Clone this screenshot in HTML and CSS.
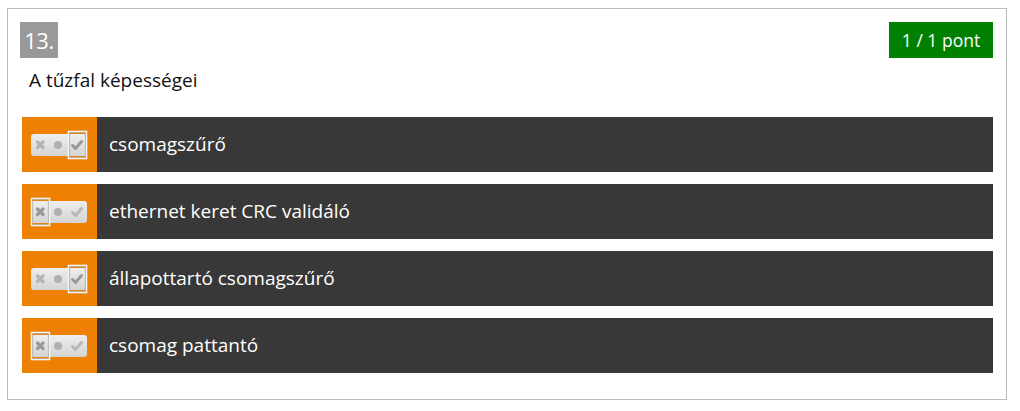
FILE: index.html
```html
<!DOCTYPE html>
<html>
<head>
<meta charset="utf-8">
<link rel="stylesheet" href="styles.css">
</head>
<body>
<div class="card">
  <div class="head">
    <span class="num">13.</span>
    <span class="score">1 / 1 pont</span>
  </div>
  <div class="title">A tűzfal képességei</div>
  <div class="rows">
    <div class="row">
      <div class="mark">
        <svg class="toggle" width="60" height="30" viewBox="0 0 60 30">
          <defs><linearGradient id="g1" x1="0" y1="0" x2="0" y2="1"><stop offset="0" stop-color="#eeeeee"/><stop offset="1" stop-color="#d4d4d4"/></linearGradient></defs>
          <rect x="2" y="4" width="56" height="22" rx="3" fill="url(#g1)"/>
          <path d="M8.5 12 L14 17.5 M14 12 L8.5 17.5" stroke="#b4b4b4" stroke-width="3.2" stroke-linecap="round"/>
          <circle cx="29" cy="15" r="4" fill="#b0b0b0"/>
          <path d="M43.5 15.5 L46.5 18.5 L52.5 11.5" stroke="#999" stroke-width="3" fill="none" stroke-linecap="round" stroke-linejoin="round"/>
          <rect x="39.5" y="1.5" width="18" height="27" fill="none" stroke="#f4f4f4" stroke-width="1.6"/>
          <rect x="40.7" y="2.7" width="15.6" height="24.6" fill="none" stroke="#aaaaaa" stroke-width="0.8"/>
        </svg>
      </div>
      <div class="label">csomagszűrő</div>
    </div>
    <div class="row">
      <div class="mark">
        <svg class="toggle" width="60" height="30" viewBox="0 0 60 30">
          <defs><linearGradient id="g2" x1="0" y1="0" x2="0" y2="1"><stop offset="0" stop-color="#eeeeee"/><stop offset="1" stop-color="#d4d4d4"/></linearGradient></defs>
          <rect x="2" y="4" width="56" height="22" rx="3" fill="url(#g2)"/>
          <path d="M8.5 12 L14 17.5 M14 12 L8.5 17.5" stroke="#999" stroke-width="3.2" stroke-linecap="round"/>
          <circle cx="29" cy="15" r="4" fill="#b0b0b0"/>
          <path d="M43.5 15.5 L46.5 18.5 L52.5 11.5" stroke="#b8b8b8" stroke-width="3" fill="none" stroke-linecap="round" stroke-linejoin="round"/>
          <rect x="2.5" y="1.5" width="18" height="27" fill="none" stroke="#f4f4f4" stroke-width="1.6"/>
          <rect x="3.7" y="2.7" width="15.6" height="24.6" fill="none" stroke="#aaaaaa" stroke-width="0.8"/>
        </svg>
      </div>
      <div class="label">ethernet keret CRC validáló</div>
    </div>
    <div class="row">
      <div class="mark">
        <svg class="toggle" width="60" height="30" viewBox="0 0 60 30">
          <defs><linearGradient id="g3" x1="0" y1="0" x2="0" y2="1"><stop offset="0" stop-color="#eeeeee"/><stop offset="1" stop-color="#d4d4d4"/></linearGradient></defs>
          <rect x="2" y="4" width="56" height="22" rx="3" fill="url(#g3)"/>
          <path d="M8.5 12 L14 17.5 M14 12 L8.5 17.5" stroke="#b4b4b4" stroke-width="3.2" stroke-linecap="round"/>
          <circle cx="29" cy="15" r="4" fill="#b0b0b0"/>
          <path d="M43.5 15.5 L46.5 18.5 L52.5 11.5" stroke="#999" stroke-width="3" fill="none" stroke-linecap="round" stroke-linejoin="round"/>
          <rect x="39.5" y="1.5" width="18" height="27" fill="none" stroke="#f4f4f4" stroke-width="1.6"/>
          <rect x="40.7" y="2.7" width="15.6" height="24.6" fill="none" stroke="#aaaaaa" stroke-width="0.8"/>
        </svg>
      </div>
      <div class="label">állapottartó csomagszűrő</div>
    </div>
    <div class="row">
      <div class="mark">
        <svg class="toggle" width="60" height="30" viewBox="0 0 60 30">
          <defs><linearGradient id="g4" x1="0" y1="0" x2="0" y2="1"><stop offset="0" stop-color="#eeeeee"/><stop offset="1" stop-color="#d4d4d4"/></linearGradient></defs>
          <rect x="2" y="4" width="56" height="22" rx="3" fill="url(#g4)"/>
          <path d="M8.5 12 L14 17.5 M14 12 L8.5 17.5" stroke="#999" stroke-width="3.2" stroke-linecap="round"/>
          <circle cx="29" cy="15" r="4" fill="#b0b0b0"/>
          <path d="M43.5 15.5 L46.5 18.5 L52.5 11.5" stroke="#b8b8b8" stroke-width="3" fill="none" stroke-linecap="round" stroke-linejoin="round"/>
          <rect x="2.5" y="1.5" width="18" height="27" fill="none" stroke="#f4f4f4" stroke-width="1.6"/>
          <rect x="3.7" y="2.7" width="15.6" height="24.6" fill="none" stroke="#aaaaaa" stroke-width="0.8"/>
        </svg>
      </div>
      <div class="label">csomag pattantó</div>
    </div>
  </div>
</div>
</body>
</html>
```
FILE: styles.css
```css
html, body {
  margin: 0;
  padding: 0;
  background: #fff;
  font-family: "Open Sans", "Liberation Sans", sans-serif;
}
.card {
  margin: 8px 0 0 7px;
  border: 1px solid #bbbbbb;
  padding: 13px 13px 0 12px;
  box-sizing: border-box;
  width: 1000px;
  height: 392px;
}
.head {
  display: flex;
  justify-content: space-between;
  align-items: flex-start;
  height: 36px;
}
.num {
  display: block;
  background: #999999;
  color: #fff;
  font-size: 22px;
  line-height: 36px;
  height: 36px;
  width: 38px;
  text-align: center;
  letter-spacing: -0.5px;
}
.score {
  display: block;
  background: #008000;
  color: #fff;
  font-size: 17.5px;
  line-height: 36px;
  height: 36px;
  width: 104px;
  text-align: center;
}
.title {
  margin: 9px 0 0 9px;
  font-size: 19px;
  line-height: 26px;
  color: #111;
  height: 26px;
}
.rows {
  margin: 24px 0 0 2px;
  display: flex;
  flex-direction: column;
  gap: 12px;
}
.row {
  display: flex;
  height: 55px;
  background: #383838;
}
.mark {
  width: 75px;
  background: #ee8104;
  display: flex;
  align-items: center;
  padding-left: 7px;
  box-sizing: border-box;
}
.toggle {
  display: block;
}
.label {
  color: #fff;
  font-size: 19px;
  line-height: 55px;
  padding-left: 12px;
}
```
